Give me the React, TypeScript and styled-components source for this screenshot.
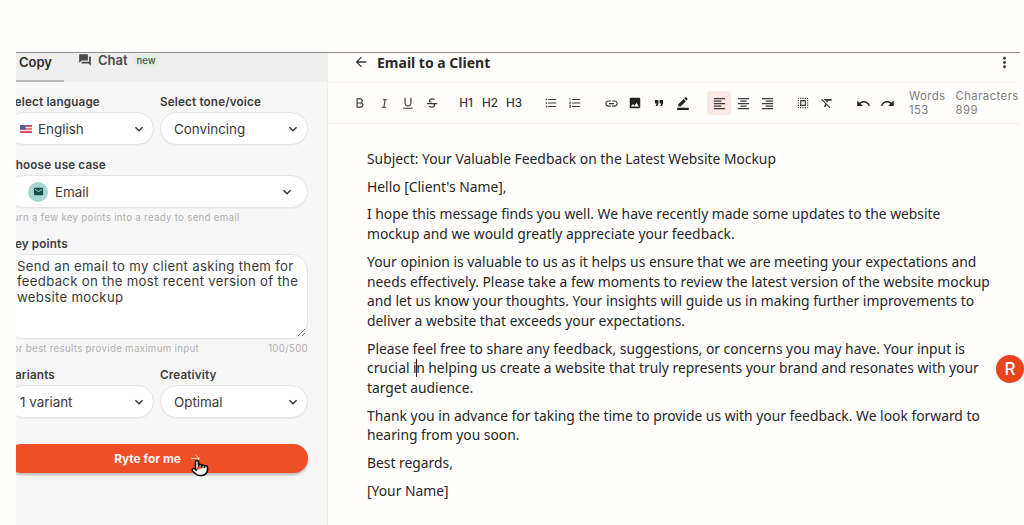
import * as React from 'react';
import styled, { createGlobalStyle } from 'styled-components';
import {
  MdArrowBack,
  MdBorderColor,
  MdForum,
  MdFormatAlignCenter,
  MdFormatAlignLeft,
  MdFormatAlignRight,
  MdFormatClear,
  MdFormatListBulleted,
  MdFormatListNumbered,
  MdFormatQuote,
  MdImage,
  MdKeyboardArrowDown,
  MdLink,
  MdMail,
  MdMoreVert,
  MdRedo,
  MdSelectAll,
  MdUndo,
} from 'react-icons/md';
import { RiBold, RiItalic, RiStrikethrough, RiUnderline } from 'react-icons/ri';
import { Pointer, ArrowRight } from 'lucide-react';

const GlobalStyle = createGlobalStyle`
  html, body {
    margin: 0;
    padding: 0;
    background: #fffefd;
  }
  * {
    box-sizing: border-box;
  }
`;

const Page = styled.div`
  width: 1024px;
  height: 525px;
  padding: 52px 4px 0 16px;
  overflow: hidden;
  position: relative;
  font-family: Inter, "Liberation Sans", sans-serif;
`;

const Frame = styled.div`
  display: flex;
  height: 473px;
  border-top: 1px solid #8f8f8f;
`;

const Panel = styled.div`
  width: 312px;
  flex: none;
  overflow: hidden;
  background: #f7f7f8;
  border-right: 1px solid #eceded;
`;

const Tabs = styled.div`
  display: flex;
  height: 29px;
  background: #efefef;
  color: #3c3c3c;
`;

const Tab = styled.div<{ $active?: boolean }>`
  display: flex;
  align-items: center;
  gap: 6px;
  height: 29px;
  font-size: 13px;
  font-weight: 600;
  padding: ${(p) => (p.$active ? '0 12px 10px 3px' : '0 0 15px 0')};
  margin-left: ${(p) => (p.$active ? '0' : '14px')};
  color: ${(p) => (p.$active ? '#2c2c2c' : '#4a4a4a')};
  border-bottom: ${(p) => (p.$active ? '2px solid #b9b9b9' : '0')};
  width: ${(p) => (p.$active ? '48px' : 'auto')};
`;

const NewBadge = styled.span`
  font-size: 9.5px;
  font-weight: 500;
  background: #e2efe4;
  color: #41584a;
  border-radius: 4px;
  padding: 1px 3px;
`;

const Form = styled.div`
  width: 301px;
  margin-left: -9px;
  padding-top: 13px;
`;

const Row = styled.div`
  display: grid;
  grid-template-columns: 147px 148px;
  gap: 6px;
`;

const Label = styled.div`
  font-size: 11.7px;
  line-height: 14px;
  font-weight: 600;
  letter-spacing: 0.15px;
  color: #3d3d3d;
  margin-bottom: 3px;
`;

const Select = styled.div<{ $indent?: number }>`
  display: flex;
  align-items: center;
  height: 33px;
  padding: 0 6px 0 ${(p) => p.$indent ?? 13}px;
  background: #fff;
  border: 1px solid #e4e4e4;
  border-radius: 17px;
  font-size: 13.4px;
  color: #3a3a3a;
  box-shadow: 0 1px 1px rgba(0, 0, 0, 0.04);
`;

const SelectText = styled.span`
  flex: 1;
`;

const Flag = styled.svg`
  width: 12px;
  height: 8px;
  margin-right: 6px;
  flex: none;
`;

const MailBadge = styled.span`
  display: flex;
  align-items: center;
  justify-content: center;
  width: 20px;
  height: 20px;
  border-radius: 50%;
  background: #a9d6d0;
  color: #14504a;
  margin-right: 7px;
  flex: none;
`;

const Hint = styled.div`
  display: flex;
  justify-content: space-between;
  font-size: 9.7px;
  line-height: 12px;
  letter-spacing: 0.3px;
  color: #b0b0b0;
  margin-top: 4px;
`;

const Field = styled.div<{ $top?: number }>`
  margin-top: ${(p) => p.$top ?? 13}px;
`;

const KeyPoints = styled.div`
  position: relative;
  height: 85px;
  padding: 4px 8px 0 9px;
  background: #fff;
  border: 1px solid #e4e4e4;
  border-radius: 17px;
  font-size: 13.2px;
  line-height: 15.3px;
  letter-spacing: 0.3px;
  color: #3a3a3a;
`;

const Grip = styled.svg`
  position: absolute;
  right: 1px;
  bottom: 1px;
  width: 9px;
  height: 9px;
`;

const RyteButton = styled.div`
  position: relative;
  display: flex;
  align-items: center;
  justify-content: center;
  gap: 8px;
  height: 29px;
  margin-top: 26px;
  padding-left: 1px;
  background: #ef4f27;
  border-radius: 15px;
  color: #fff8f2;
  font-size: 11.9px;
  font-weight: 700;
  box-shadow: 0 2px 3px rgba(0, 0, 0, 0.25);
`;

const HandCursor = styled.span`
  position: absolute;
  left: 184px;
  top: 15px;
  display: flex;
  color: #111;
`;

const Editor = styled.div`
  flex: 1;
  min-width: 0;
`;

const Header = styled.div`
  display: flex;
  align-items: center;
  height: 29px;
  padding: 0 7px 11px 25px;
  color: #333;
`;

const Title = styled.div`
  flex: 1;
  margin-left: 8px;
  font-family: "Noto Sans", sans-serif;
  font-size: 14px;
  font-weight: 700;
  color: #2a2a2a;
`;

const Toolbar = styled.div`
  display: flex;
  align-items: center;
  gap: 12px;
  height: 42px;
  padding-left: 20px;
  background: #fffefd;
  border-top: 1px solid #f4f4f4;
  border-bottom: 1px solid #f1f1f1;
  color: #3a3a3a;
`;

const Group = styled.div<{ $shift?: string }>`
  display: flex;
  margin: ${(p) => p.$shift ?? '0'};
`;

const ToolButton = styled.div<{ $active?: boolean }>`
  display: flex;
  align-items: center;
  justify-content: center;
  width: 24px;
  height: 24px;
  border-radius: 3px;
  font-size: 11.8px;
  font-weight: 500;
  background: ${(p) => (p.$active ? '#fae9e4' : 'transparent')};
`;

const Stats = styled.div`
  display: flex;
  gap: 10px;
  margin-left: -2px;
  font-size: 11.3px;
  line-height: 14px;
  letter-spacing: 0.45px;
  color: #7c7c7c;
`;

const Document = styled.div`
  padding: 25px 0 0 39px;
  width: 665px;
  font-family: "Noto Sans", sans-serif;
  font-size: 13.85px;
  line-height: 19.7px;
  color: #262626;
`;

const Para = styled.p`
  margin: 0 0 8px;
`;

const Caret = styled.span`
  display: inline-block;
  width: 1.5px;
  height: 18px;
  margin: 0 -1px;
  background: #222;
  vertical-align: -4px;
`;

const Assistant = styled.div`
  position: absolute;
  left: 996px;
  top: 355px;
  display: flex;
  align-items: center;
  justify-content: center;
  width: 28px;
  height: 28px;
  border-radius: 50%;
  background: #e8451c;
  color: #fff;
  font-size: 17px;
  font-weight: 500;
`;

const chevron = <MdKeyboardArrowDown size={16} color="#333" />;

const App: React.FC = () => {
  return (
    <Page>
      <GlobalStyle />
      <Frame>
        <Panel>
          <Tabs>
            <Tab $active>Copy</Tab>
            <Tab>
              <MdForum size={14} />
              Chat
              <NewBadge>new</NewBadge>
            </Tab>
          </Tabs>
          <Form>
            <Row>
              <div>
                <Label>Select language</Label>
                <Select $indent={12}>
                  <Flag viewBox="0 0 12 8">
                    <rect width="12" height="8" fill="#d9506a" />
                    <rect y="2" width="12" height="1.3" fill="#f6e4e4" />
                    <rect y="4.7" width="12" height="1.3" fill="#f6e4e4" />
                    <rect width="5.5" height="4.5" fill="#4a5f9c" />
                  </Flag>
                  <SelectText>English</SelectText>
                  {chevron}
                </Select>
              </div>
              <div>
                <Label>Select tone/voice</Label>
                <Select>
                  <SelectText>Convincing</SelectText>
                  {chevron}
                </Select>
              </div>
            </Row>
            <Field>
              <Label>Choose use case</Label>
              <Select $indent={20}>
                <MailBadge><MdMail size={11} /></MailBadge>
                <SelectText>Email</SelectText>
                <MdKeyboardArrowDown size={16} color="#333" style={{ marginRight: 6 }} />
              </Select>
              <Hint>Turn a few key points into a ready to send email</Hint>
            </Field>
            <Field>
              <Label>Key points</Label>
              <KeyPoints>
                Send an email to my client asking them for feedback on the most recent version of the website mockup
                <Grip viewBox="0 0 9 9">
                  <path d="M1 8 8 1M5 8 8 5" stroke="#777" strokeWidth="1" />
                </Grip>
              </KeyPoints>
              <Hint>
                <span>For best results provide maximum input</span>
                <span>100/500</span>
              </Hint>
            </Field>
            <Field>
              <Row>
                <div>
                  <Label>Variants</Label>
                  <Select $indent={12}>
                    <SelectText>1 variant</SelectText>
                    {chevron}
                  </Select>
                </div>
                <div>
                  <Label>Creativity</Label>
                  <Select>
                    <SelectText>Optimal</SelectText>
                    {chevron}
                  </Select>
                </div>
              </Row>
            </Field>
            <RyteButton>
              Ryte for me
              <ArrowRight size={13} strokeWidth={1.6} />
              <HandCursor><Pointer size={18} fill="#fff" strokeWidth={2.2} /></HandCursor>
            </RyteButton>
          </Form>
        </Panel>
        <Editor>
          <Header>
            <MdArrowBack size={16} />
            <Title>Email to a Client</Title>
            <MdMoreVert size={17} />
          </Header>
          <Toolbar>
            <Group>
              <ToolButton><RiBold size={14} /></ToolButton>
              <ToolButton><RiItalic size={13} /></ToolButton>
              <ToolButton><RiUnderline size={14} /></ToolButton>
              <ToolButton><RiStrikethrough size={14} /></ToolButton>
            </Group>
            <Group $shift="0 1px 0 -2px">
              <ToolButton>H1</ToolButton>
              <ToolButton>H2</ToolButton>
              <ToolButton>H3</ToolButton>
            </Group>
            <Group>
              <ToolButton><MdFormatListBulleted size={14} /></ToolButton>
              <ToolButton><MdFormatListNumbered size={14} /></ToolButton>
            </Group>
            <Group>
              <ToolButton><MdLink size={15} /></ToolButton>
              <ToolButton><MdImage size={14} color="#222" /></ToolButton>
              <ToolButton><MdFormatQuote size={14} color="#222" /></ToolButton>
              <ToolButton><MdBorderColor size={14} color="#222" /></ToolButton>
            </Group>
            <Group>
              <ToolButton $active><MdFormatAlignLeft size={15} /></ToolButton>
              <ToolButton><MdFormatAlignCenter size={15} /></ToolButton>
              <ToolButton><MdFormatAlignRight size={15} /></ToolButton>
            </Group>
            <Group>
              <ToolButton><MdSelectAll size={14} /></ToolButton>
              <ToolButton><MdFormatClear size={14} /></ToolButton>
            </Group>
            <Group>
              <ToolButton><MdUndo size={15} color="#222" /></ToolButton>
              <ToolButton><MdRedo size={15} color="#222" /></ToolButton>
            </Group>
            <Stats>
              <div>Words<br />153</div>
              <div>Characters<br />899</div>
            </Stats>
          </Toolbar>
          <Document>
            <Para>Subject: Your Valuable Feedback on the Latest Website Mockup</Para>
            <Para>Hello [Client's Name],</Para>
            <Para>I hope this message finds you well. We have recently made some updates to the website mockup and we would greatly appreciate your feedback.</Para>
            <Para>Your opinion is valuable to us as it helps us ensure that we are meeting your expectations and needs effectively. Please take a few moments to review the latest version of the website mockup and let us know your thoughts. Your insights will guide us in making further improvements to deliver a website that exceeds your expectations.</Para>
            <Para>Please feel free to share any feedback, suggestions, or concerns you may have. Your input is crucial i<Caret />n helping us create a website that truly represents your brand and resonates with your target audience.</Para>
            <Para>Thank you in advance for taking the time to provide us with your feedback. We look forward to hearing from you soon.</Para>
            <Para>Best regards,</Para>
            <Para>[Your Name]</Para>
          </Document>
        </Editor>
      </Frame>
      <Assistant>R</Assistant>
    </Page>
  );
};

export default App;
